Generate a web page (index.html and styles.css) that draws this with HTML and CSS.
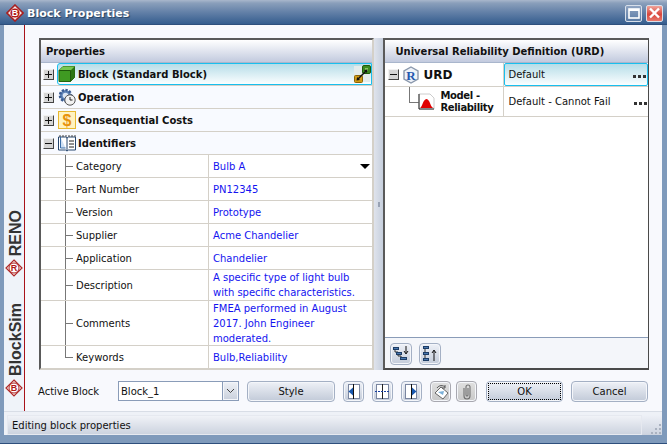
FILE: index.html
```html
<!DOCTYPE html>
<html lang="en">
<head>
<meta charset="utf-8">
<title>Block Properties</title>
<link rel="stylesheet" href="styles.css">
</head>
<body>
<div class="window">
  <header class="titlebar">
    <svg class="logo" width="18" height="18" viewBox="0 0 18 18"><path d="M9 1l8 8-8 8-8-8z" fill="#f4e8e8" stroke="#a82020" stroke-width="1.6"/><circle cx="9" cy="9" r="4.6" fill="#b01818"/><text x="9" y="12" class="logo-letter" text-anchor="middle">B</text></svg>
    <span class="title">Block Properties</span>
    <span class="grow"></span>
    <span class="capbtn max"><svg width="12" height="11" viewBox="0 0 12 11"><rect x="1" y="1" width="10" height="9" fill="none" stroke="#fff" stroke-width="1.6"/><rect x="1" y="1" width="10" height="2" fill="#fff"/></svg></span>
    <span class="capbtn close"><svg width="13" height="12" viewBox="0 0 13 12"><path d="M2 1.5l9 9M11 1.5l-9 9" stroke="#fff" stroke-width="2.4" fill="none"/></svg></span>
  </header>
  <div class="frame">
    <div class="main">
      <aside class="strip">
        <span class="strip-text reno">RENO</span>
        <svg class="strip-logo" width="18" height="18" viewBox="0 0 18 18"><path d="M9 1l8 8-8 8-8-8z" fill="#f7eeee" stroke="#b02828" stroke-width="1.2"/><circle cx="9" cy="9" r="5" fill="#fff" stroke="#b02828"/><text x="9" y="12" class="logo-letter red" text-anchor="middle">R</text></svg>
        <span class="strip-text sim">BlockSim</span>
        <svg class="strip-logo" width="18" height="18" viewBox="0 0 18 18"><path d="M9 1l8 8-8 8-8-8z" fill="#f7eeee" stroke="#b02828" stroke-width="1.2"/><circle cx="9" cy="9" r="5" fill="#fff" stroke="#b02828"/><text x="9" y="12" class="logo-letter red" text-anchor="middle">B</text></svg>
      </aside>
      <div class="content">
        <div class="panes">
          <section class="panel props">
            <div class="panel-head">Properties</div>
            <div class="group selected">
              <span class="exp plus"></span>
              <span class="sel-box">
                <svg class="gicon" width="18" height="18" viewBox="0 0 18 18"><path d="M1 5.500l4-4h11.500v11l-4 4H1z" fill="#3f9a22" stroke="#24620f"/><path d="M12.500 5.500l4-4v11l-4 4z" fill="#2b7514"/><path d="M1 5.500l4-4h11.500l-4 4z" fill="#78c850"/><path d="M1 5.500h11.500v11" fill="none" stroke="#1e5a0c"/></svg>
                <b>Block (Standard Block)</b>
                <span class="grow"></span>
                <svg class="link" width="17" height="18" viewBox="0 0 17 18"><rect x="0" y="1" width="16" height="16" fill="#e4ecec"/><rect x="0.500" y="10.500" width="8" height="7" rx="1" fill="#d09a18" stroke="#8a6408"/><rect x="8.500" y="0.500" width="8" height="8" rx="1.500" fill="#3c8a20" stroke="#1f5a0c"/><rect x="11" y="3" width="3" height="3" fill="#86c860"/><path d="M4 14l8-8" stroke="#111" stroke-width="1.400"/><path d="M2.500 15.500l3.500-.6-2.900-2.900zM13.500 4.500l-3.500.6 2.900 2.900z" fill="#111"/></svg>
              </span>
            </div>
            <div class="group">
              <span class="exp plus"></span>
              <svg class="gicon" width="18" height="18" viewBox="0 0 18 18"><circle cx="7.500" cy="7.500" r="5.500" fill="#5f84b8" stroke="#3a5c92" stroke-width="2.600" stroke-dasharray="2.2 1.4"/><circle cx="7.500" cy="7.500" r="2.800" fill="#dce6f4"/><circle cx="12" cy="12" r="5.200" fill="#f2f2f2" stroke="#555"/><path d="M12 9v3h2.500" fill="none" stroke="#222"/></svg>
              <b>Operation</b>
            </div>
            <div class="group">
              <span class="exp plus"></span>
              <svg class="gicon" width="18" height="18" viewBox="0 0 18 18"><rect x="0.500" y="0.500" width="17" height="17" fill="#fff2c0" stroke="#e8b830"/><text x="9" y="14.500" class="dollar" text-anchor="middle">$</text></svg>
              <b>Consequential Costs</b>
            </div>
            <div class="group">
              <span class="exp minus"></span>
              <svg class="gicon" width="18" height="18" viewBox="0 0 18 18"><path d="M.5 3v13h7l1.500 1 1.500-1h7V3h-7L9 4 7.500 3z" fill="#fff" stroke="#26466e"/><path d="M9 4v13" stroke="#26466e"/><path d="M2.500 3v11h5" fill="#cfe0f4" stroke="#3b6ea8"/><path d="M11 7h5M11 10h5M11 13h5" stroke="#222"/><path d="M2 1v2M5 1v2M8 1v2M11 1v2M14 1v2M17 1v2" stroke="#444"/></svg>
              <b>Identifiers</b>
            </div>
            <div class="row"><span class="name">Category</span><span class="val val-flex">Bulb A<span class="grow"></span><i class="down"></i></span></div>
            <div class="row"><span class="name">Part Number</span><span class="val">PN12345</span></div>
            <div class="row"><span class="name">Version</span><span class="val">Prototype</span></div>
            <div class="row"><span class="name">Supplier</span><span class="val">Acme Chandelier</span></div>
            <div class="row"><span class="name">Application</span><span class="val">Chandelier</span></div>
            <div class="row h30"><span class="name">Description</span><span class="val">A specific type of light bulb<br>with specific characteristics.</span></div>
            <div class="row h45"><span class="name">Comments</span><span class="val">FMEA performed in August<br>2017. John Engineer<br>moderated.</span></div>
            <div class="row last"><span class="name">Keywords</span><span class="val">Bulb,Reliability</span></div>
          </section>
          <div class="splitter"><i></i></div>
          <section class="panel urd">
            <div class="panel-head center">Universal Reliability Definition (URD)</div>
            <div class="urd-row top">
              <span class="urd-name">
                <span class="exp minus"></span>
                <svg class="ricon" width="18" height="18" viewBox="0 0 18 18"><path d="M9 1l7 4v8l-7 4-7-4V5z" fill="#eef2f8" stroke="#8a98ac" stroke-width="1.400"/><text x="9" y="13.500" class="r-letter" text-anchor="middle">R</text></svg>
                <b class="urd-title">URD</b>
              </span>
              <span class="urd-val selcell">Default<span class="grow"></span><i class="dots"></i></span>
            </div>
            <div class="urd-row second">
              <span class="urd-name child">
                <svg class="ricon" width="17" height="17" viewBox="0 0 17 17"><path d="M1 1h11l4 4v11H1z" fill="#fff" stroke="#ccc"/><path d="M1 1v15h15" fill="none" stroke="#222"/><path d="M2 15c2 0 3-9 6.500-9s4 9 7 9z" fill="#e00000"/></svg>
                <b class="model">Model -<br>Reliability</b>
              </span>
              <span class="urd-val">Default - Cannot Fail<span class="grow"></span><i class="dots"></i></span>
            </div>
            <div class="urd-space"></div>
            <div class="urd-tools">
              <button class="tool"><svg width="18" height="18" viewBox="0 0 18 18"><path d="M3 4v3h3v4h3v3" fill="none" stroke="#333"/><rect x="1.500" y="2.500" width="5" height="2" fill="#4a78b0" stroke="#1d3d66"/><rect x="4.500" y="7.500" width="5" height="2" fill="#4a78b0" stroke="#1d3d66"/><rect x="8.500" y="12.500" width="6" height="2" fill="#4a78b0" stroke="#1d3d66"/><path d="M14 1v7M12 6l2 3 2-3" fill="none" stroke="#111"/></svg></button>
              <button class="tool"><svg width="18" height="18" viewBox="0 0 18 18"><path d="M4 3v12h3M4 9h3" fill="none" stroke="#333"/><rect x="2.500" y="1.500" width="5" height="2" fill="#4a78b0" stroke="#1d3d66"/><rect x="2.500" y="7.500" width="5" height="2" fill="#4a78b0" stroke="#1d3d66"/><rect x="2.500" y="13.500" width="5" height="2" fill="#4a78b0" stroke="#1d3d66"/><path d="M13 16V6M11 8l2-3 2 3" fill="none" stroke="#111"/></svg></button>
            </div>
          </section>
        </div>
        <div class="actions">
          <span class="label">Active Block</span>
          <span class="combo"><span class="combo-text">Block_1</span><span class="combo-arrow"><svg width="9" height="6" viewBox="0 0 9 6"><path d="M1 1l3.500 3.500L8 1" fill="none" stroke="#444"/></svg></span></span>
          <button class="btn style">Style</button>
          <button class="ibtn"><svg width="15" height="15" viewBox="0 0 15 15"><rect x="2.500" y="0.500" width="11" height="14" fill="#fff" stroke="#7a86a0"/><path d="M7.500 0v15" stroke="#111"/><path d="M7 3.500v8L2.500 7.500z" fill="#1858b0"/></svg></button>
          <button class="ibtn"><svg width="15" height="15" viewBox="0 0 15 15"><rect x="1.500" y="0.500" width="12" height="14" fill="#fff" stroke="#7a86a0"/><path d="M7.500 0v15" stroke="#222"/><path d="M0 7.500h15" stroke="#1840a0" stroke-dasharray="2 1"/></svg></button>
          <button class="ibtn"><svg width="15" height="15" viewBox="0 0 15 15"><rect x="1.500" y="0.500" width="11" height="14" fill="#fff" stroke="#7a86a0"/><path d="M7.500 0v15" stroke="#111"/><path d="M8 3.500v8l4.500-4z" fill="#1858b0"/></svg></button>
          <button class="ibtn off"><svg width="16" height="16" viewBox="0 0 16 16"><path d="M8 3l7 6-5 6-8-6z" fill="#fff" stroke="#666"/><path d="M5 8l6-1-1 4z" fill="#7ab0d8"/><path d="M4 4c2-3 6-3 8-1M12 1v3H9" fill="none" stroke="#555"/></svg></button>
          <button class="ibtn off clip"><svg width="14" height="17" viewBox="0 0 14 17"><path d="M4 5v8a3 3 0 0 0 6 0V4a2 2 0 0 0-4 0v8a1 1 0 0 0 2 0V5" fill="none" stroke="#707070" stroke-width="1.100"/></svg></button>
          <button class="btn ok"><span class="focus">OK</span></button>
          <button class="btn cancel">Cancel</button>
        </div>
      </div>
    </div>
    <footer class="status">
      <span class="status-text">Editing block properties</span>
      <span class="grip"><svg width="12" height="12" viewBox="0 0 12 12"><path d="M9 1h2v2H9zM9 5h2v2H9zM9 9h2v2H9zM5 5h2v2H5zM5 9h2v2H5zM1 9h2v2H1z" fill="#aab2c0"/></svg></span>
    </footer>
  </div>
</div>
</body>
</html>
```

FILE: styles.css
```css
* { box-sizing: border-box; }
html, body { margin: 0; padding: 0; }
body { width: 667px; height: 444px; overflow: hidden; font-family: "DejaVu Sans", sans-serif; font-size: 10px; color: #111; }
button { font: inherit; color: inherit; margin: 0; padding: 0; }
.grow { flex: 1; }
.window { width: 667px; height: 444px; display: flex; flex-direction: column; background: #7f9abb; }
.titlebar { height: 25px; flex: none; display: flex; align-items: center; padding: 2px 4px 0 6px; background: linear-gradient(#a9b7cc 0, #8a9fbb 3px, #6481a8 12px, #355d8e 24px); border-bottom: 1px solid #2e4f7c; }
.logo { flex: none; }
.logo-letter { font: bold 9px "Liberation Sans", sans-serif; fill: #fff; }
.logo-letter.red { fill: #b01818; }
.title { margin-left: 3px; color: #fff; font-weight: bold; font-size: 11px; text-shadow: 1px 1px 1px #24405f; }
.capbtn { width: 17px; height: 17px; border: 1px solid #d7dfea; border-radius: 2px; display: flex; align-items: center; justify-content: center; }
.capbtn.max { background: linear-gradient(#8fa4c2, #5a7ba5); margin-right: 4px; }
.capbtn.close { background: linear-gradient(#f0a49a, #d8463c 55%, #e8786c); }
.frame { flex: 1; min-height: 0; display: flex; flex-direction: column; padding: 0 5px 8px 4px; border-bottom: 1px solid #2e4f7c; }
.main { flex: 1; min-height: 0; display: flex; background: #f8f9fd; }
.strip { width: 21px; flex: none; display: flex; flex-direction: column; align-items: center; background: #eff3f9; border-right: 1px solid #a8131a; padding: 185px 0 0; }
.strip-text { writing-mode: vertical-rl; transform: rotate(180deg); font: bold 16px "Liberation Sans", sans-serif; color: #333; line-height: 18px; margin-left: 4px; }
.strip-logo { flex: none; margin-top: 3px; }
.sim { margin-top: 26px; }
.content { flex: 1; min-width: 0; display: flex; flex-direction: column; padding: 13px 13px 0 14px; }
.panes { height: 332px; flex: none; display: flex; }
.panel { display: flex; flex-direction: column; border-style: solid; border-color: #5a5a5a #d4d0c8 #d4d0c8 #5a5a5a; border-width: 2px; background: #f8faff; }
.props { width: 336px; }
.urd { width: 266px; background: #fff; border-right-width: 1px; border-bottom-color: #4a4a4a; border-right-color: #4a4a4a; }
.panel-head { height: 23px; flex: none; display: flex; align-items: center; padding-left: 5px; font-weight: bold; font-size: 10px; background: linear-gradient(#fff, #c2cade); border-bottom: 1px solid #a9b6cc; }
.panel-head.center { padding-left: 10px; }
.splitter { width: 9px; flex: none; display: flex; align-items: center; justify-content: center; background: linear-gradient(90deg, #dfe3ec, #c6cfdd); }
.splitter i { width: 2px; height: 5px; background: #98a2b4; }
.group { height: 23px; flex: none; display: flex; align-items: center; padding-left: 2px; border-bottom: 1px solid #d4d0c8; }
.group b { font-size: 10px; margin-left: 2px; }
.group.selected { align-items: stretch; }
.group.selected .exp { align-self: center; }
.sel-box { flex: 1; display: flex; align-items: center; margin-left: 3px; border: 1px solid #19bfee; border-radius: 3px 0 0 3px; background: linear-gradient(#b6dde8, #fbfeff); }
.gicon { flex: none; margin-left: 4px; }
.sel-box .gicon { margin-left: 0; }
.link { flex: none; }
.dollar { font: bold 16px "Liberation Sans", sans-serif; fill: #e8920c; }
.exp { width: 11px; height: 11px; flex: none; border: 1px solid; border-color: #f2f2f2 #444 #444 #f2f2f2; background-color: #d5d5d5; background-repeat: no-repeat; }
.exp.plus { background-image: linear-gradient(#111, #111), linear-gradient(#111, #111); background-size: 7px 1px, 1px 7px; background-position: center, center; }
.exp.minus { background-image: linear-gradient(#111, #111); background-size: 7px 1px; background-position: center; }
.row { height: 23px; flex: none; display: flex; background: #fff; border-bottom: 1px solid #d4d0c8; }
.row.h30 { height: 31px; }
.row.h45 { height: 45px; }
.row.last { border-bottom: 0; flex: 1; }
.name { width: 168px; flex: none; display: flex; align-items: center; padding-left: 35px; border-right: 1px solid #d4d0c8; background-image: linear-gradient(#777, #777), linear-gradient(#777, #777); background-repeat: no-repeat; background-size: 1px calc(100% + 1px), 8px 1px; background-position: 24px 0, 24px 50%; }
.row.last .name { background-size: 1px 50%, 8px 1px; }
.val { flex: 1; min-width: 0; padding-left: 4px; color: #1414f0; line-height: 15px; align-self: center; }
.val-flex { display: flex; align-items: center; }
.down { width: 0; height: 0; margin-right: 2px; border-style: solid; border-width: 5px 5px 0; border-color: #000 transparent transparent; }
.urd-row { flex: none; display: flex; border-bottom: 1px solid #d4d0c8; }
.urd-row.top { height: 24px; }
.urd-row.second { height: 30px; }
.urd-name { width: 119px; flex: none; display: flex; align-items: center; padding-left: 3px; border-right: 1px solid #d4d0c8; }
.urd-title { font-size: 12px; margin-left: 3px; }
.ricon { flex: none; margin-left: 3px; }
.r-letter { font: bold 13px "Liberation Serif", serif; fill: #2458b0; }
.child { padding-left: 18px; background-image: linear-gradient(#777, #777), linear-gradient(#777, #777); background-repeat: no-repeat; background-size: 1px 15px, 10px 1px; background-position: 24px 0, 24px 15px; }
.child .ricon { margin-left: 15px; }
.model { margin-left: 5px; font-size: 10px; line-height: 12px; letter-spacing: -.35px; }
.urd-val { flex: 1; display: flex; align-items: center; padding: 0 1px 0 4px; }
.selcell { border: 1px solid #19bfee; border-radius: 2px; background: linear-gradient(#b6dde8, #fbfeff); padding-left: 3px; }
.dots { width: 13px; height: 3px; margin-top: 3px; background: linear-gradient(90deg, #333 3px, transparent 3px) 0 0 / 5px 3px repeat-x; }
.urd-space { flex: 1; border-bottom: 1px solid #8a9cb8; }
.urd-tools { height: 30px; flex: none; display: flex; align-items: flex-start; gap: 7px; padding: 5px 0 0 5px; background: #f4f6fa; }
.tool { width: 22px; height: 22px; display: flex; align-items: center; justify-content: center; border: 1px solid #a4b0c4; border-radius: 4px; background: linear-gradient(#eef1f7, #c4ccda); box-shadow: inset 0 0 0 1px #f4f6fa; }
.actions { height: 41px; flex: none; display: flex; align-items: flex-start; padding-top: 11px; }
.label { width: 80px; flex: none; height: 20px; display: flex; align-items: center; margin-left: -1px; }
.combo { width: 121px; height: 20px; flex: none; display: flex; border: 1px solid #8a9cb8; background: #fff; }
.combo-text { flex: 1; display: flex; align-items: center; padding-left: 2px; }
.combo-arrow { width: 16px; display: flex; align-items: center; justify-content: center; border-left: 1px solid #8a9cb8; background: linear-gradient(#eef1f6, #c9d0dc); box-shadow: inset 0 0 0 1px #f4f6fa; }
.btn { height: 21px; flex: none; display: flex; align-items: center; justify-content: center; border: 1px solid #a4b0c4; border-radius: 4px; background: linear-gradient(#eef1f7, #c2cad8); box-shadow: inset 0 0 0 1px #f4f6fa; }
.style { width: 88px; margin-left: 8px; }
.ibtn { width: 21px; height: 21px; flex: none; margin-left: 8px; display: flex; align-items: center; justify-content: center; border: 1px solid #a4b0c4; border-radius: 4px; background: linear-gradient(#eef1f7, #c2cad8); box-shadow: inset 0 0 0 1px #f4f6fa; }
.ibtn.off { background: linear-gradient(#e0e0e0, #c8c8c8); border-color: #a8a8b0; }
.ibtn.clip { margin-left: 5px; }
.ok { width: 77px; margin-left: 9px; padding: 1px; }
.focus { width: 100%; height: 100%; display: flex; align-items: center; justify-content: center; border: 1px dotted #000; }
.cancel { width: 77px; margin-left: 8px; }
.status { height: 24px; flex: none; display: flex; background: #eef1f7; border-top: 1px solid #d8dde6; padding: 3px 0 0 3px; }
.status-text { flex: 1; display: flex; align-items: center; padding-left: 4px; background: linear-gradient(#f0f2f7, #ccd3df); border: 1px solid #e6e9f0; }
.grip { width: 20px; flex: none; display: flex; align-items: flex-end; justify-content: flex-end; background: linear-gradient(#eef1f7, #ccd3df); }
```
